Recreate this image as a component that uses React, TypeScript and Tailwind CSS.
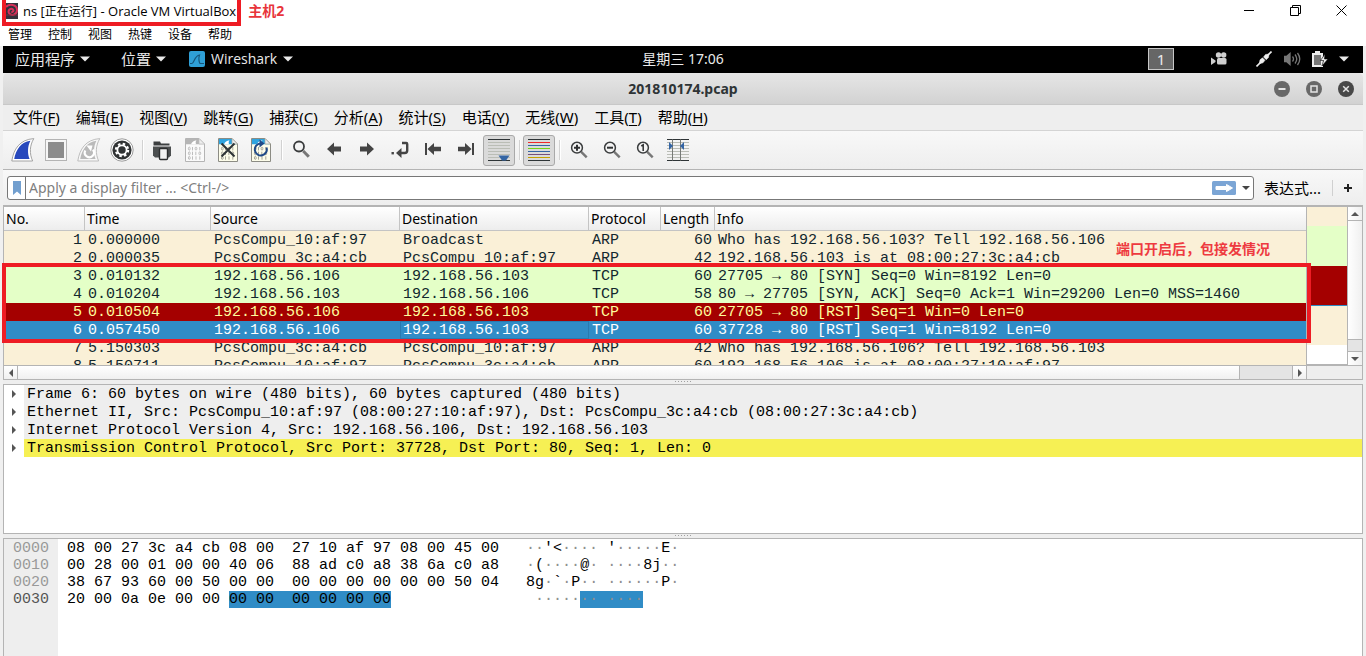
import type { ReactNode } from 'react';

const UI = "font-['Noto_Sans','Noto_Sans_CJK_SC',sans-serif]";
const MONO = "font-['Liberation_Mono','DejaVu_Sans_Mono',monospace]";

const hostMenu = ['管理', '控制', '视图', '热键', '设备', '帮助'];

const appMenu: [string, string][] = [
  ['文件', 'F'],
  ['编辑', 'E'],
  ['视图', 'V'],
  ['跳转', 'G'],
  ['捕获', 'C'],
  ['分析', 'A'],
  ['统计', 'S'],
  ['电话', 'Y'],
  ['无线', 'W'],
  ['工具', 'T'],
  ['帮助', 'H'],
];

const arp = 'bg-[#faf0d7] text-[#12272e]';
const tcp = 'bg-[#e4ffc7] text-[#12272e]';
const rst = 'bg-[#a40000] text-[#fffc9c]';
const selected = 'bg-[#308cc6] text-white';

const packets = [
  { no: 1, time: '0.000000', src: 'PcsCompu_10:af:97', dst: 'Broadcast', proto: 'ARP', len: 60, info: 'Who has 192.168.56.103? Tell 192.168.56.106', tone: arp },
  { no: 2, time: '0.000035', src: 'PcsCompu_3c:a4:cb', dst: 'PcsCompu_10:af:97', proto: 'ARP', len: 42, info: '192.168.56.103 is at 08:00:27:3c:a4:cb', tone: arp },
  { no: 3, time: '0.010132', src: '192.168.56.106', dst: '192.168.56.103', proto: 'TCP', len: 60, info: '27705 → 80 [SYN] Seq=0 Win=8192 Len=0', tone: tcp },
  { no: 4, time: '0.010204', src: '192.168.56.103', dst: '192.168.56.106', proto: 'TCP', len: 58, info: '80 → 27705 [SYN, ACK] Seq=0 Ack=1 Win=29200 Len=0 MSS=1460', tone: tcp },
  { no: 5, time: '0.010504', src: '192.168.56.106', dst: '192.168.56.103', proto: 'TCP', len: 60, info: '27705 → 80 [RST] Seq=1 Win=0 Len=0', tone: rst },
  { no: 6, time: '0.057450', src: '192.168.56.106', dst: '192.168.56.103', proto: 'TCP', len: 60, info: '37728 → 80 [RST] Seq=1 Win=8192 Len=0', tone: selected },
  { no: 7, time: '5.150303', src: 'PcsCompu_3c:a4:cb', dst: 'PcsCompu_10:af:97', proto: 'ARP', len: 42, info: 'Who has 192.168.56.106? Tell 192.168.56.103', tone: arp },
  { no: 8, time: '5.150711', src: 'PcsCompu_10:af:97', dst: 'PcsCompu_3c:a4:cb', proto: 'ARP', len: 60, info: '192.168.56.106 is at 08:00:27:10:af:97', tone: arp },
];

const details = [
  'Frame 6: 60 bytes on wire (480 bits), 60 bytes captured (480 bits)',
  'Ethernet II, Src: PcsCompu_10:af:97 (08:00:27:10:af:97), Dst: PcsCompu_3c:a4:cb (08:00:27:3c:a4:cb)',
  'Internet Protocol Version 4, Src: 192.168.56.106, Dst: 192.168.56.103',
  'Transmission Control Protocol, Src Port: 37728, Dst Port: 80, Seq: 1, Len: 0',
];

const hexRows = [
  { offset: '0000', hex: '08 00 27 3c a4 cb 08 00  27 10 af 97 08 00 45 00', ascii: "··'<···· '·····E·" },
  { offset: '0010', hex: '00 28 00 01 00 00 40 06  88 ad c0 a8 38 6a c0 a8', ascii: '·(····@· ····8j··' },
  { offset: '0020', hex: '38 67 93 60 00 50 00 00  00 00 00 00 00 00 50 04', ascii: '8g·`·P·· ······P·' },
  { offset: '0030', hex: '20 00 0a 0e 00 00 ', hexMark: '00 00  00 00 00 00', ascii: ' ·····', asciiMark: '·· ····' },
];

function Dots({ text }: { text: string }) {
  return (
    <>
      {text.split(/(·+)/).map((part, i) =>
        part.startsWith('·') ? (
          <span key={i} className="text-[#8f8f8f]">{part}</span>
        ) : (
          part
        ),
      )}
    </>
  );
}

function Tri({ dir, className = '' }: { dir: 'up' | 'down' | 'left' | 'right'; className?: string }) {
  const d = { up: 'M0 6L4 2L8 6z', down: 'M0 2L4 6L8 2z', left: 'M6 0L2 4L6 8z', right: 'M2 0L6 4L2 8z' }[dir];
  return (
    <svg viewBox="0 0 8 8" className={`size-2 shrink-0 ${className}`} aria-hidden="true">
      <path d={d} fill="currentColor" />
    </svg>
  );
}

function PanelArrow() {
  return (
    <svg viewBox="0 0 10 6" className="h-[6px] w-[10px]" fill="currentColor" aria-hidden="true">
      <path d="M0 .5h10L5 5.5z" />
    </svg>
  );
}

function Tool({ label, pressed, children }: { label: string; pressed?: boolean; children: ReactNode }) {
  return (
    <button type="button" aria-label={label} aria-pressed={pressed} className="size-[33px] shrink-0">
      <svg viewBox="0 0 33 33" className="size-[33px]" fill="none">
        {pressed && <rect x=".5" y="1.5" width="31" height="30" rx="2.5" fill="#dadada" stroke="#a9a9a9" />}
        {children}
      </svg>
    </button>
  );
}

function Sep() {
  return (
    <div className="flex w-[7px] shrink-0 justify-center py-[6px]">
      <div className="h-[20px] w-[2px] border-r border-l border-r-white border-l-[#d2d2d2]" />
    </div>
  );
}

const fin = 'M4.8 27C6.5 15.5 12.5 5.5 26.8 4.6C22.6 11.6 22.3 19.5 25.6 27z';
const finInner = 'M7.2 25C9 15.5 14 8 23.4 6.7C20.4 12.5 20.4 19.6 22.6 25z';

function FileIcon({ active }: { active: boolean }) {
  const ink = active ? '#a5a598' : '#bdbdbd';
  return (
    <>
      <path d="M6.5 4.5H20L25.5 10V27.5H6.5z" fill={active ? '#fdfdea' : '#fafafa'} stroke={active ? '#8c8c84' : '#b4b4b4'} />
      <path d="M7 5H19.8L25 10.2H7z" fill={active ? '#2fa4df' : '#b5b5b5'} />
      <path d="M12 10.2C12.8 8 15 6.4 17.5 6.2C16.4 7.6 16.6 9 17 10.2z" fill="#fff" />
      <path d="M20 4.5V10H25.5z" fill="#eee" stroke={ink} strokeWidth=".7" />
      <g stroke={ink} strokeWidth="1">
        {[13, 17.7, 22.3].map((y, row) => (
          <g key={y}>
            <ellipse cx="10.3" cy={y + 1.6} rx=".9" ry="1.5" />
            <path d={row === 1 ? `M13.5 ${y}v3.4M16.8 ${y}v3.4` : `M13.5 ${y}v3.4`} />
            {row === 0 && <ellipse cx="17" cy={y + 1.6} rx=".9" ry="1.5" />}
            {row === 2 && <path d={`M17 ${y}v3.4`} />}
            {row === 1 ? <ellipse cx="20.8" cy={y + 1.6} rx=".9" ry="1.5" /> : <path d={`M20.8 ${y}v3.4`} />}
          </g>
        ))}
      </g>
    </>
  );
}

function Lens({ children }: { children?: ReactNode }) {
  return (
    <>
      <path d="M18.2 17.8l5.5 5.5" stroke="#777" strokeWidth="2.4" />
      <circle cx="14" cy="13.7" r="5.4" stroke="#3b3d3e" strokeWidth="1.5" />
      <g stroke="#2f3132" strokeWidth="2">{children}</g>
    </>
  );
}

const greyLines = [8, 11, 14, 17, 20, 23];

function Lines({ colors }: { colors: string[] }) {
  return (
    <g shapeRendering="crispEdges">
      <path fill="#2e3436" d="M5 5h22v1H5zM5 26h22v1H5z" />
      {greyLines.map((y, i) => (
        <rect key={y} x="5" y={y} width="22" height="1" fill={colors[i]} />
      ))}
    </g>
  );
}

const allGrey = ['#babdb6', '#babdb6', '#babdb6', '#babdb6', '#babdb6', '#babdb6'];
const rainbow = ['#ef2929', '#3465a4', '#73d216', '#3465a4', '#75507b', '#c4a000'];

function Splitter() {
  return (
    <div className="flex h-[4px] shrink-0 items-start justify-center gap-[2px] pt-px">
      {[0, 1, 2, 3, 4, 5].map((n) => (
        <span key={n} className="size-px bg-[#a0a0a0]" />
      ))}
    </div>
  );
}

function Toolbar() {
  const arrowFill = '#444';
  return (
    <div className="flex h-[39px] shrink-0 items-start border-b border-[#b4b4b4] bg-linear-to-b from-[#f8f8f8] to-[#eeeeee] pt-[3px] pl-1">
      <Tool label="开始捕获">
        <path d={fin} fill="#fff" stroke="#9a9a9a" strokeWidth=".9" />
        <path d={finInner} fill="#2748bd" />
      </Tool>
      <Tool label="停止捕获">
        <rect x="5.5" y="5.5" width="21" height="21" fill="#f6f6f6" stroke="#b4b4b4" />
        <rect x="8" y="8" width="16" height="16" fill="#8c8c8c" />
      </Tool>
      <Tool label="重新开始捕获">
        <path d={fin} fill="#f8f8f8" stroke="#b8b8b8" strokeWidth=".9" />
        <path d={finInner} fill="#bababa" />
        <path d="M12.3 16.5a4.6 4.6 0 1 0 7.6-.8" stroke="#fff" strokeWidth="2.2" />
        <path d="M13.5 11.5h6l-1.5 6z" fill="#fff" />
      </Tool>
      <Tool label="捕获选项">
        <circle cx="16" cy="16" r="11.2" fill="#fff" stroke="#9c9c9c" />
        <circle cx="16" cy="16" r="9.6" fill="#303334" />
        <circle cx="16" cy="16" r="6" stroke="#fff" strokeWidth="2.4" strokeDasharray="2.4 2.312" />
        <circle cx="16" cy="16" r="4.6" stroke="#fff" strokeWidth="1.8" />
      </Tool>
      <Sep />
      <Tool label="打开">
        <path d="M7.5 7.5h6.5l1 2h8.5v2H7.5z" fill="#3c3f40" />
        <path d="M7 12.5h18v9l-2 2H9l-2-2z" fill="#4c4f50" />
        <rect x="13.5" y="14.5" width="8" height="11" rx="1" fill="#f2f2f2" stroke="#2c2e2f" strokeWidth="1.4" />
      </Tool>
      <Tool label="保存">
        <FileIcon active={false} />
      </Tool>
      <Tool label="关闭">
        <FileIcon active />
        <path d="M9.5 9.5l13 13M22.5 9.5l-13 13" stroke="#2e3436" strokeWidth="2" />
      </Tool>
      <Tool label="重新加载">
        <FileIcon active />
        <path d="M21.5 13.5a6 6 0 1 1-6-4" stroke="#204a87" strokeWidth="2" />
        <path d="M14.5 5.5l5 4l-5 4z" fill="#204a87" />
      </Tool>
      <Sep />
      <Tool label="查找">
        <path d="M18.2 17l5.6 5.7" stroke="#777" strokeWidth="3" />
        <circle cx="14" cy="12.5" r="5" stroke="#3b3d3e" strokeWidth="1.8" />
      </Tool>
      <Tool label="上一个">
        <path d="M9 15l7-6.5v4h7v5h-7v4z" fill={arrowFill} />
      </Tool>
      <Tool label="下一个">
        <path d="M23 15l-7-6.5v4H9v5h7v4z" fill={arrowFill} />
      </Tool>
      <Tool label="转到">
        <rect x="7.5" y="18" width="2.4" height="2.4" fill={arrowFill} />
        <path d="M18 9h4.2q1 0 1 1v6.5q0 2.5-2.5 2.5h-5" stroke={arrowFill} strokeWidth="2.4" />
        <path d="M12 19l5.5-5v10z" fill={arrowFill} />
      </Tool>
      <Tool label="首个">
        <path d="M8 9h2v12H8zM10.5 15l6.5-6v3.8h7v4.4h-7V21z" fill={arrowFill} />
      </Tool>
      <Tool label="末个">
        <path d="M24 9h-2v12h2zM21.5 15l-6.5-6v3.8H8v4.4h7V21z" fill={arrowFill} />
      </Tool>
      <Tool label="自动滚动" pressed>
        <Lines colors={allGrey} />
        <path d="M15.5 21.5h11l-3.5 5h-4z" fill="#3465a4" />
      </Tool>
      <Sep />
      <Tool label="着色" pressed>
        <Lines colors={rainbow} />
      </Tool>
      <Sep />
      <Tool label="放大">
        <Lens>
          <path d="M11 13.7h6M14 10.7v6" />
        </Lens>
      </Tool>
      <Tool label="缩小">
        <Lens>
          <path d="M11 13.7h6" />
        </Lens>
      </Tool>
      <Tool label="正常大小">
        <Lens>
          <path d="M12.3 12l1.9-1.2v6.2" strokeWidth="1.5" />
        </Lens>
      </Tool>
      <Tool label="调整列宽">
        <Lines colors={allGrey} />
        <path d="M10.5 5.5v21M18.5 5.5v21" stroke="#777a77" />
        <path d="M7 8v8l4-4zM22 8v8l-4-4z" fill="#3465a4" />
      </Tool>
    </div>
  );
}

function PacketList() {
  const th = 'border-r border-[#c4c4c4] p-0 pl-[2px] text-left font-normal';
  return (
    <section className="relative h-[175px] shrink-0 border border-t-2 border-[#b4b4b4] bg-[#eee]">
      <div className="flex h-[158px]">
        <div className="flex min-w-0 flex-1 flex-col">
          <div className="min-h-0 flex-1 overflow-hidden">
            <table className="w-full table-fixed border-separate border-spacing-0">
              <colgroup>
                <col className="w-[81px]" />
                <col className="w-[126px]" />
                <col className="w-[189px]" />
                <col className="w-[189px]" />
                <col className="w-[72px]" />
                <col className="w-[54px]" />
                <col />
              </colgroup>
              <thead>
                <tr className="h-[24px] bg-linear-to-b from-white to-[#ececec] text-[14px] leading-[23px] text-black">
                  {['No.', 'Time', 'Source', 'Destination', 'Protocol', 'Length'].map((h) => (
                    <th key={h} className={`${th} border-b`}>{h}</th>
                  ))}
                  <th className="border-b border-[#c4c4c4] p-0 pl-[2px] text-left font-normal">Info</th>
                </tr>
              </thead>
              <tbody className={`${MONO} text-[15px] leading-4 whitespace-pre`}>
                {packets.map((p) => (
                  <tr key={p.no} className={`h-[18px] ${p.tone}`}>
                    <td className="p-0 pt-[2px] pr-[3px] text-right">{p.no}</td>
                    <td className="p-0 pt-[2px] pl-[3px]">{p.time}</td>
                    <td className="p-0 pt-[2px] pl-[3px]">{p.src}</td>
                    <td className={`p-0 pt-[2px] pl-[3px] ${p.no === 6 ? 'inset-ring inset-ring-[#2a7ab0]' : ''}`}>{p.dst}</td>
                    <td className="p-0 pt-[2px] pl-[3px]">{p.proto}</td>
                    <td className="p-0 pt-[2px] pr-[3px] text-right">{p.len}</td>
                    <td className="p-0 pt-[2px] pl-[3px]">{p.info}</td>
                  </tr>
                ))}
              </tbody>
            </table>
          </div>
        </div>
        <div className="flex w-[42px] shrink-0 flex-col border-r border-b border-l border-[#b4b4b4] bg-white">
          <div className="h-[19px] bg-[#faf0d7]" />
          <div className="h-[40px] bg-[#e4ffc7]" />
          <div className="h-[39px] bg-[#a40000]" />
          <div className="h-px bg-[#308cc6]" />
          <div className="h-[39px] bg-[#faf0d7]" />
        </div>
        <div className="flex w-[14px] shrink-0 flex-col items-center bg-linear-to-r from-white to-[#f0f0f0] text-[#555]">
          <div className="flex h-[14px] w-full items-center justify-center border-b border-[#b4b4b4]">
            <Tri dir="up" />
          </div>
          <div className="flex-1" />
          <div className="h-[13px] w-full border-y border-[#b4b4b4] bg-[#e4e4e4]" />
          <div className="flex h-[13px] w-full items-center justify-center">
            <Tri dir="down" />
          </div>
        </div>
      </div>
      <div className="flex h-[14px] border-t border-[#b4b4b4] text-[#555]">
        <div className="flex min-w-0 flex-1 bg-linear-to-b from-white to-[#f0f0f0]">
          <div className="flex w-[14px] items-center justify-center border-r border-[#b4b4b4]">
            <Tri dir="left" />
          </div>
          <div className="flex-1" />
          <div className="w-[54px] border-x border-[#b4b4b4] bg-[#e4e4e4]" />
          <div className="flex w-[13px] items-center justify-center">
            <Tri dir="right" />
          </div>
        </div>
        <div className="w-[56px] border-l border-[#b4b4b4]" />
      </div>
      <div className="pointer-events-none absolute top-[56px] right-[51px] -left-[2px] h-[80px] border-4 border-[#ee1c24]" />
      <div className="absolute top-[33px] right-[92px] text-[14px] leading-[18px] font-bold text-[#ee3a40]">
        端口开启后，包接发情况
      </div>
    </section>
  );
}

export default function App() {
  return (
    <div className={`flex h-screen min-h-[640px] flex-col overflow-hidden bg-[#f0f0f0] ${UI} text-black`}>
      <header className="relative flex h-[25px] shrink-0 items-start bg-white">
        <div className="ml-[2px] flex h-[26px] shrink-0 items-center gap-[5px] border-4 border-t-0 border-[#ee1c24] pr-px text-[13px] leading-[22px] whitespace-nowrap">
          <svg viewBox="0 0 12 16" className="h-4 w-3" aria-hidden="true">
            <rect width="12" height="16" fill="#32323c" />
            <path d="M0 4C3 .5 11 1 11 7c0 5-6 6.5-8 3c-1.5-3 2-5.5 4-3.5c1.2 1.5-.5 3-1.6 2" fill="none" stroke="#d8305a" strokeWidth="2" />
            <path d="M0 12h12" stroke="#7b2a40" />
          </svg>
          <h1 className="font-['Open_Sans','Noto_Sans_CJK_SC',sans-serif]">
            ns [<span className="text-[12px]">正在运行</span>] - Oracle VM VirtualBox
          </h1>
        </div>
        <span className="ml-[7px] text-[14px] leading-[21px] font-bold text-[#e8353b]">主机2</span>
        <div className="mr-[2px] ml-auto flex h-[21px] items-center">
          <button type="button" aria-label="最小化" className="flex w-[46px] justify-center">
            <svg viewBox="0 0 11 11" className="size-[11px]"><path d="M0 5.5h10" stroke="#000" /></svg>
          </button>
          <button type="button" aria-label="还原" className="flex w-[46px] justify-center">
            <svg viewBox="0 0 11 11" className="size-[11px]" fill="none" stroke="#000"><path d="M.5 2.5h8v8h-8zM2.5 2.5v-2h8v8h-2" /></svg>
          </button>
          <button type="button" aria-label="关闭" className="flex w-[46px] justify-center">
            <svg viewBox="0 0 11 11" className="size-[11px]" stroke="#000"><path d="M.5.5l10 10M10.5.5l-10 10" /></svg>
          </button>
        </div>
      </header>
      <nav className="flex h-[21px] shrink-0 items-start gap-4 bg-white pt-px pl-2 text-[12px] leading-[18px]">
        {hostMenu.map((m) => (
          <button type="button" key={m}>{m}</button>
        ))}
      </nav>

      <main className="mx-[3px] flex min-h-0 flex-1 flex-col bg-[#eee]">
        <div className="grid h-[27px] shrink-0 grid-cols-[1fr_auto_1fr] items-center bg-black pb-px text-[15px] leading-[24px] text-[#eaeaea]">
          <div className="flex items-center pl-3">
            <button type="button" className="flex items-center gap-[5px]">应用程序<PanelArrow /></button>
            <button type="button" className="ml-[31px] flex items-center gap-[5px]">位置<PanelArrow /></button>
            <button type="button" className="ml-[23px] flex items-center gap-[6px] text-[14px]">
              <svg viewBox="0 0 16 16" className="size-4" aria-hidden="true">
                <rect width="16" height="16" rx="2" fill="#2f9fd6" />
                <path d="M1 12.5h2C5 12.5 5.5 4.5 10.5 4C9.3 7 10 12.5 11.5 12.5H15" fill="none" stroke="#17567c" strokeWidth="1.2" />
              </svg>
              <span className="font-['Open_Sans',sans-serif]">Wireshark</span>
              <PanelArrow />
            </button>
          </div>
          <div className="text-[14px]">星期三 17:06</div>
          <div className="flex items-center justify-end pr-[14px]">
            <span className="flex h-[22px] w-[26px] items-center justify-center border border-[#c8c8c8] bg-[#666] pb-px leading-[18px]">1</span>
            <svg viewBox="0 0 16 14" className="ml-[37px] h-[14px] w-4" fill="#cfcfcf" aria-hidden="true">
              <circle cx="7.5" cy="3" r="2.7" /><circle cx="12.7" cy="3" r="2.7" />
              <rect x="6" y="6" width="9.5" height="6.5" rx="1.5" />
              <path d="M0 5.5l4.5 3v1.5L0 13z" />
            </svg>
            <svg viewBox="0 0 16 16" className="ml-[29px] size-4" fill="#eee" stroke="#eee" aria-hidden="true">
              <path d="M.5 15.5l4-4M11.5 4.5l4-4" strokeWidth="1.6" />
              <path d="M3.2 12.8l.8-4l2.5-2l2.5 2.5l-2 2.5zM7.5 6l2-2.5l3.5-.5l-.5 3.5l-2.3 2.2z" strokeWidth=".5" />
            </svg>
            <svg viewBox="0 0 17 14" className="ml-3 h-[14px] w-[17px]" fill="none" stroke="#777" strokeWidth="1.3" aria-hidden="true">
              <path d="M.5 4.5h2L6 1.5v11L2.5 9.5h-2z" fill="#777" />
              <path d="M8.5 4.5q2 2.5 0 5M11 2.5q3.5 4.5 0 9M13.5 1q4.5 6 0 12" />
            </svg>
            <svg viewBox="0 0 16 16" className="ml-[11px] size-4" fill="#eee" aria-hidden="true">
              <path d="M3 0h5v2h3v14H0V2h3z" />
              <path d="M2 4h7v10H2z" fill="#777" />
              <path d="M13 3l-4.5 6.5h3L10 15l6-7h-3.5z" stroke="#000" strokeWidth=".6" />
            </svg>
            <span className="ml-[11px]"><PanelArrow /></span>
          </div>
        </div>

        <div className="grid h-[32px] shrink-0 grid-cols-[1fr_auto_1fr] items-center rounded-t-[5px] border-b border-[#c8c8c8] bg-linear-to-b from-[#e6e6e6] to-[#d2d2d2] text-[14px] text-[#2e3436]">
          <h2 className="col-start-2 font-bold">201810174.pcap</h2>
          <div className="flex justify-end gap-4 pr-[9px]">
            <button type="button" aria-label="最小化窗口">
              <svg viewBox="0 0 16 16" className="size-4"><circle cx="8" cy="8" r="8" fill="#686868" /><path d="M4.5 8h7" stroke="#e4e4e4" strokeWidth="2" /></svg>
            </button>
            <button type="button" aria-label="最大化窗口">
              <svg viewBox="0 0 16 16" className="size-4"><circle cx="8" cy="8" r="8" fill="#686868" /><path d="M5 5h6v6H5z" fill="none" stroke="#e4e4e4" strokeWidth="1.5" /></svg>
            </button>
            <button type="button" aria-label="关闭窗口">
              <svg viewBox="0 0 16 16" className="size-4"><circle cx="8" cy="8" r="8" fill="#484848" /><path d="M5.2 5.2l5.6 5.6M10.8 5.2l-5.6 5.6" stroke="#e4e4e4" strokeWidth="1.5" /></svg>
            </button>
          </div>
        </div>

        <nav className="flex h-[26px] shrink-0 items-start gap-4 border-b border-[#d4d4d4] bg-[#eee] pl-[10px] text-[15px] leading-[24px]">
          {appMenu.map(([label, key]) => (
            <button type="button" key={key}>
              {label}(<span className="underline underline-offset-2">{key}</span>)
            </button>
          ))}
        </nav>

        <Toolbar />

        <div className="flex h-[35px] shrink-0 items-center bg-linear-to-b from-[#f8f8f8] to-[#eee] pl-1">
          <div className="flex h-6 min-w-0 flex-1 items-center rounded-[3px] border border-[#777] bg-white">
            <button type="button" aria-label="过滤器书签" className="flex h-full w-[18px] shrink-0 items-center justify-center border-r border-[#777]">
              <svg viewBox="0 0 8 14" className="h-[14px] w-2"><path d="M0 0h8v14L4 10.5L0 14z" fill="#729fcf" /></svg>
            </button>
            <input
              type="text"
              aria-label="显示过滤器"
              placeholder="Apply a display filter ... <Ctrl-/>"
              className="h-full min-w-0 flex-1 bg-transparent pl-[3px] text-[14px] outline-none placeholder:text-[#7f7f7f]"
            />
            <button type="button" aria-label="应用过滤器" className="shrink-0">
              <svg viewBox="0 0 24 14" className="h-[14px] w-6">
                <rect width="24" height="14" rx="1.5" fill="#7ba5d5" />
                <path d="M4 5.5h10.5v-2l6 3.5l-6 3.5v-2H4z" fill="#fff" stroke="#fff" strokeLinejoin="round" />
              </svg>
            </button>
            <button type="button" aria-label="最近的过滤器" className="flex w-[17px] shrink-0 justify-center pl-[3px] text-[#444]">
              <Tri dir="down" />
            </button>
          </div>
          <button type="button" className="ml-[10px] text-[15px] leading-6">表达式...</button>
          <div className="ml-[11px] h-4 w-px bg-[#d0d0d0]" />
          <button type="button" aria-label="添加过滤器按钮" className="flex w-[30px] justify-center">
            <svg viewBox="0 0 8 8" className="size-2" stroke="#222" strokeWidth="2"><path d="M0 4h8M4 0v8" /></svg>
          </button>
        </div>

        <PacketList />
        <Splitter />

        <section className={`h-[150px] shrink-0 overflow-hidden border border-[#b4b4b4] bg-white ${MONO} text-[15px] leading-4 whitespace-pre`}>
          <ul>
            {details.map((line, i) => (
              <li key={line} className="flex h-[18px]">
                <button type="button" aria-label="展开" className="flex w-5 shrink-0 items-center justify-center text-[#555]">
                  <Tri dir="right" />
                </button>
                <span className={`min-w-0 flex-1 pt-[2px] pl-[3px] ${i === 3 ? 'bg-[#f6f054]' : 'bg-[#eee]'}`}>{line}</span>
              </li>
            ))}
          </ul>
        </section>
        <Splitter />

        <section className={`flex min-h-0 flex-1 overflow-hidden border border-b-0 border-[#b4b4b4] bg-white ${MONO} text-[15px] leading-[17px] whitespace-pre`}>
          <div className="w-[54px] shrink-0 bg-[#eee] pt-px pl-[9px] text-[#999]">
            {hexRows.map((r) => (
              <div key={r.offset} className={r.hexMark ? 'text-[#555]' : ''}>{r.offset}</div>
            ))}
          </div>
          <div className="pt-px pl-[9px]">
            {hexRows.map((r) => (
              <div key={r.offset}>
                {r.hex}
                {r.hexMark && <span className="bg-[#308cc6]">{r.hexMark}</span>}
              </div>
            ))}
          </div>
          <div className="pt-px pl-[27px]">
            {hexRows.map((r) => (
              <div key={r.offset}>
                <Dots text={r.ascii} />
                {r.asciiMark && (
                  <span className="bg-[#308cc6]">
                    <Dots text={r.asciiMark} />
                  </span>
                )}
              </div>
            ))}
          </div>
        </section>
      </main>
    </div>
  );
}
